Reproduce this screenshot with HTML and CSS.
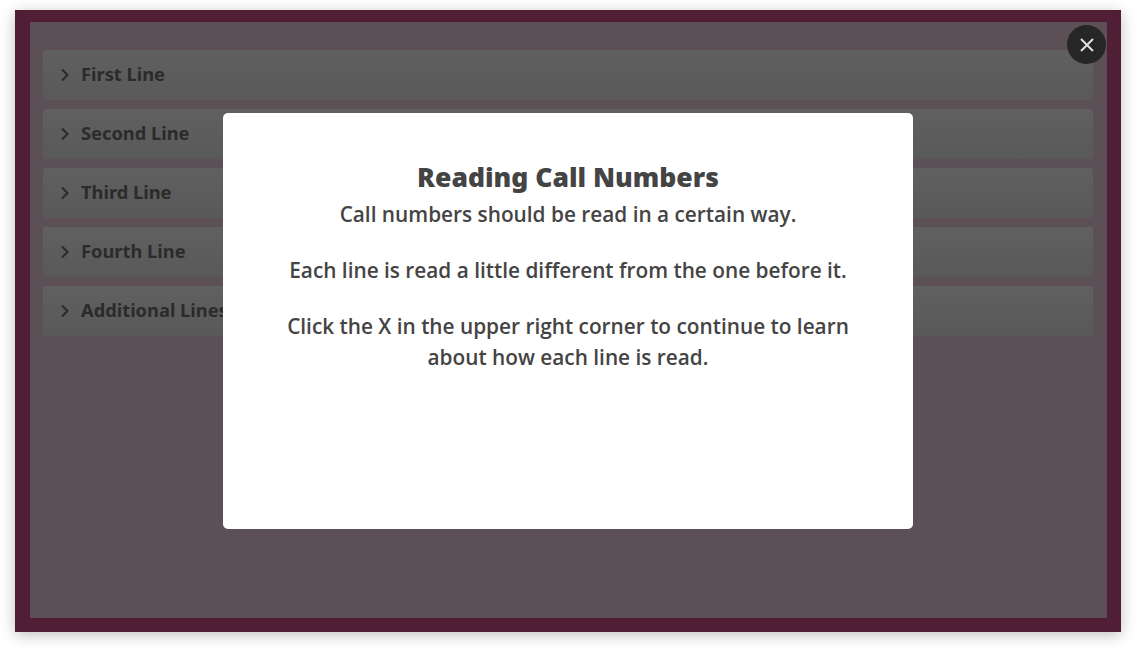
FILE: index.html
```html
<html lang="en">
<head>
    <meta charset="UTF-8">
    <meta name="viewport" content="width=device-width, initial-scale=1.0">
    <title>Reading Call Numbers</title>
    <link rel="stylesheet" href="styles.css">
</head>
<body>
    <div class="frame">
        <div class="inner">
            <div class="line"><svg class="chevron" viewBox="0 0 10 14"><path d="M2 1.5 7.5 7 2 12.5"/></svg><span>First Line</span></div>
            <div class="line"><svg class="chevron" viewBox="0 0 10 14"><path d="M2 1.5 7.5 7 2 12.5"/></svg><span>Second Line</span></div>
            <div class="line"><svg class="chevron" viewBox="0 0 10 14"><path d="M2 1.5 7.5 7 2 12.5"/></svg><span>Third Line</span></div>
            <div class="line"><svg class="chevron" viewBox="0 0 10 14"><path d="M2 1.5 7.5 7 2 12.5"/></svg><span>Fourth Line</span></div>
            <div class="line"><svg class="chevron" viewBox="0 0 10 14"><path d="M2 1.5 7.5 7 2 12.5"/></svg><span>Additional Lines</span></div>
        </div>

        <!-- Popup over the lines -->
        <div class="modal">
            <h2>Reading Call Numbers</h2>
            <p>Call numbers should be read in a certain way.</p>
            <p>Each line is read a little different from the one before it.</p>
            <p>Click the X in the upper right corner to continue to learn about how each line is read.</p>
        </div>
        <button class="close" aria-label="Close">
            <svg viewBox="0 0 16 16"><path d="M2 2 14 14M14 2 2 14"/></svg>
        </button>
    </div>
</body>
</html>
```

FILE: styles.css
```css
/* Global Styles */
body {
    font-family: "Open Sans", sans-serif;
    margin: 0;
    padding: 10px 15px 21px;
    background-color: #fff;
    height: 653px;
    box-sizing: border-box;
    overflow: hidden;
}

/* Frame */
.frame {
    position: relative;
    height: 622px;
    width: 1106px;
    box-sizing: border-box;
    padding: 12px 14px 14px 15px;
    background-color: #501f35;
    box-shadow: 0 3px 14px rgba(0, 0, 0, 0.25);
}

.inner {
    height: 100%;
    box-sizing: border-box;
    padding: 28px 14px 0 13px;
    background-color: #5c4f55;
    display: flex;
    flex-direction: column;
    gap: 9px;
}

/* Accordion rows */
.line {
    height: 50px;
    box-sizing: border-box;
    padding-left: 17px;
    display: flex;
    align-items: center;
    background: linear-gradient(#606060, #595959);
    border-radius: 3px;
    color: #2b2b2b;
    font-family: "Noto Sans", sans-serif;
    font-size: 18.3px;
    font-weight: 700;
}

.line span {
    margin-bottom: 4px;
}

.chevron {
    width: 10px;
    height: 14px;
    margin-right: 11px;
    fill: none;
    stroke: #2b2b2b;
    stroke-width: 2.1;
}

/* Popup */
.modal {
    position: absolute;
    left: 208px;
    top: 103px;
    width: 690px;
    height: 416px;
    box-sizing: border-box;
    padding: 43px 60px 0;
    background-color: #fff;
    border-radius: 5px;
    text-align: center;
    color: #444;
    font-size: 20.8px;
    font-weight: 600;
    line-height: 31px;
}

.modal h2 {
    margin: 0;
    font-family: "Noto Sans", sans-serif;
    font-size: 26.5px;
    font-weight: 900;
    line-height: 43px;
}

.modal p {
    margin: 0 0 25px;
}

.close {
    position: absolute;
    left: 1052px;
    top: 15px;
    width: 39px;
    height: 39px;
    padding: 0;
    border: none;
    border-radius: 50%;
    background-color: #262626;
    display: flex;
    align-items: center;
    justify-content: center;
}

.close svg {
    width: 16px;
    height: 16px;
    fill: none;
    stroke: #e0e0e0;
    stroke-width: 2;
}
```
